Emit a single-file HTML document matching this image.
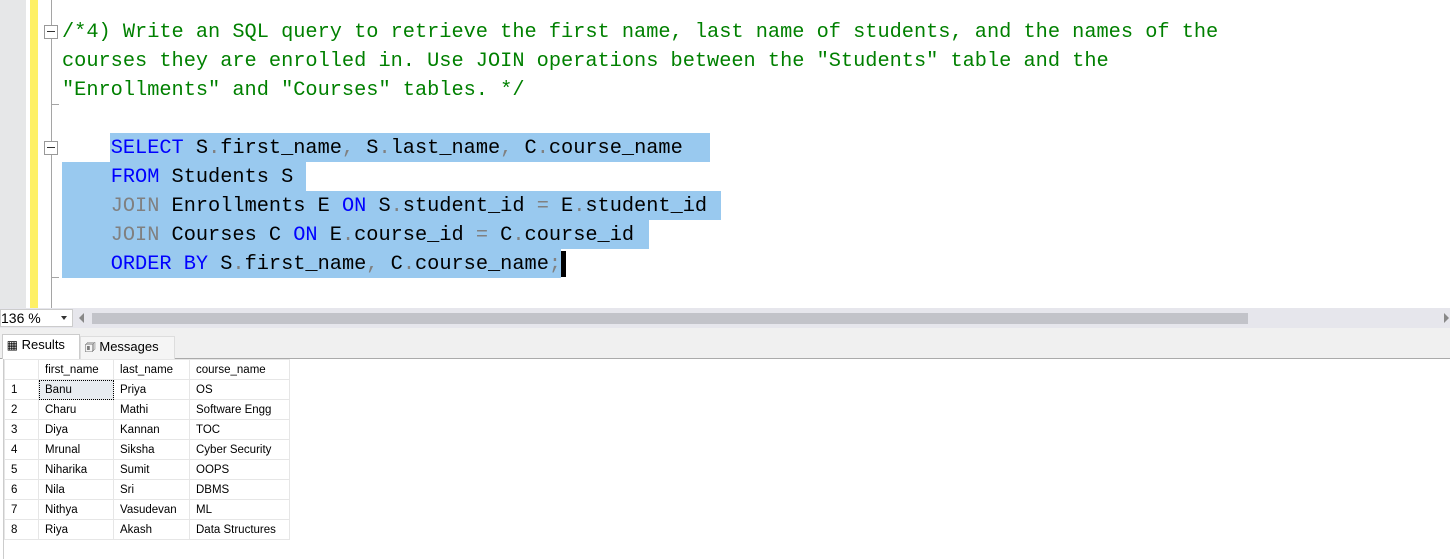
<!DOCTYPE html>
<html><head><style>
body{margin:0;width:1450px;height:559px;background:#fff;position:relative;overflow:hidden;font-family:"Liberation Sans",sans-serif}
.a{position:absolute}
.code{position:absolute;left:62px;font-family:"Liberation Mono",monospace;font-size:20.3px;white-space:pre;line-height:29px}
.g{color:#008000}.b{color:#0000ff}.k{color:#808080}
.sel{position:absolute;background:#99c9ef;height:29px}
.box{position:absolute;left:44px;width:12px;height:12px;border:1px solid #999;background:#fff}
.box:after{content:"";position:absolute;left:2px;top:5px;width:8px;height:1px;background:#333}
table{border-collapse:collapse;font-size:11.5px;position:absolute;left:4px;top:359px}
td{height:19px;padding:0 0 0 6px;border:1px solid #e6e6e6;color:#000}
</style></head><body>
<div class="a" style="left:0;top:0;width:26px;height:308px;background:#e6e7e8"></div>
<div class="a" style="left:30px;top:0;width:8px;height:308px;background:#fef065"></div>
<div class="a" style="left:51px;top:0;width:1px;height:308px;background:#a5a5a5"></div>
<div class="a" style="left:51px;top:104px;width:8px;height:1px;background:#a5a5a5"></div>
<div class="a" style="left:51px;top:277px;width:8px;height:1px;background:#a5a5a5"></div>
<div class="box" style="top:25px"></div>
<div class="box" style="top:141px"></div>
<div class="sel" style="left:110px;top:133px;width:600px"></div>
<div class="sel" style="left:62px;top:162px;width:244px"></div>
<div class="sel" style="left:62px;top:191px;width:659px"></div>
<div class="sel" style="left:62px;top:220px;width:587px"></div>
<div class="sel" style="left:62px;top:249px;width:499px"></div>
<div class="a" style="left:561px;top:251px;width:5px;height:26px;background:#000"></div>
<div class="code g" style="top:18px">/*4) Write an SQL query to retrieve the first name, last name of students, and the names of the
courses they are enrolled in. Use JOIN operations between the "Students" table and the
"Enrollments" and "Courses" tables. */</div>
<div class="code" style="top:134px">    <span class="b">SELECT</span> S<span class="k">.</span>first_name<span class="k">,</span> S<span class="k">.</span>last_name<span class="k">,</span> C<span class="k">.</span>course_name
    <span class="b">FROM</span> Students S
    <span class="k">JOIN</span> Enrollments E <span class="b">ON</span> S<span class="k">.</span>student_id <span class="k">=</span> E<span class="k">.</span>student_id
    <span class="k">JOIN</span> Courses C <span class="b">ON</span> E<span class="k">.</span>course_id <span class="k">=</span> C<span class="k">.</span>course_id
    <span class="b">ORDER BY</span> S<span class="k">.</span>first_name<span class="k">,</span> C<span class="k">.</span>course_name<span class="k">;</span></div>
<div class="a" style="left:0;top:308px;width:1450px;height:20px;background:#e6e6ec"></div>
<div class="a" style="left:0;top:309px;width:73px;height:18px;background:#fff;border:1px solid #ccc;box-sizing:border-box;font-size:14px;line-height:16px;padding-left:0">136 %</div>
<div class="a" style="left:61px;top:316px;width:0;height:0;border:3px solid transparent;border-top:4px solid #333"></div>
<div class="a" style="left:79px;top:313px;width:0;height:0;border:5px solid transparent;border-right:5px solid #888;border-left:0"></div>
<div class="a" style="left:92px;top:313px;width:1156px;height:11px;background:#c2c3c9"></div>
<div class="a" style="left:1444px;top:313px;width:0;height:0;border:5px solid transparent;border-left:5px solid #888;border-right:0"></div>
<div class="a" style="left:0;top:328px;width:1450px;height:30px;background:#f0f0f0"></div>
<div class="a" style="left:0;top:358px;width:1450px;height:1px;background:#aaa"></div>
<div class="a" style="left:2px;top:334px;width:76px;height:24px;background:#fff;border:1px solid #ccc;border-bottom:none;font-size:13px;line-height:20px">&nbsp;<span style="font-size:12px">▦</span> Results</div>
<div class="a" style="left:80px;top:336px;width:93px;height:22px;background:#f5f5f5;border:1px solid #ddd;border-bottom:none;font-size:13px;line-height:20px">&nbsp;<span style="font-size:12px">🗊</span> Messages</div>
<div class="a" style="left:3px;top:359px;width:1px;height:200px;background:#ccc"></div>
<table>
<tr><td style="width:27px"></td><td style="width:68px">first_name</td><td style="width:69px">last_name</td><td style="width:93px">course_name</td></tr>
<tr><td>1</td><td style="outline:1px dotted #000;outline-offset:-1px;background:#e8ecf0">Banu</td><td>Priya</td><td>OS</td></tr>
<tr><td>2</td><td>Charu</td><td>Mathi</td><td>Software Engg</td></tr>
<tr><td>3</td><td>Diya</td><td>Kannan</td><td>TOC</td></tr>
<tr><td>4</td><td>Mrunal</td><td>Siksha</td><td>Cyber Security</td></tr>
<tr><td>5</td><td>Niharika</td><td>Sumit</td><td>OOPS</td></tr>
<tr><td>6</td><td>Nila</td><td>Sri</td><td>DBMS</td></tr>
<tr><td>7</td><td>Nithya</td><td>Vasudevan</td><td>ML</td></tr>
<tr><td>8</td><td>Riya</td><td>Akash</td><td>Data Structures</td></tr>
</table>
</body></html>
